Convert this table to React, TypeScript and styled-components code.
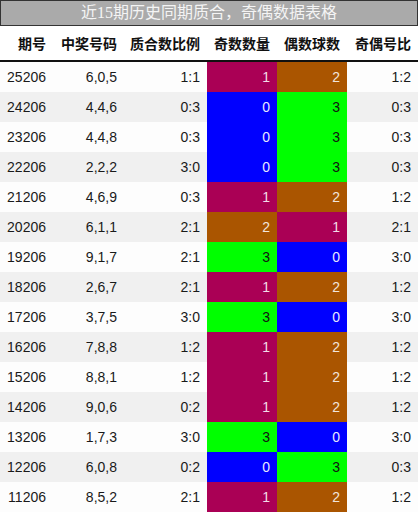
import React from "react";
import styled, { createGlobalStyle } from "styled-components";

const GlobalStyle = createGlobalStyle`
  html, body { margin: 0; padding: 0; background: #ffffff; }
  body { font-family: "Liberation Sans", "Noto Sans CJK SC", sans-serif; }
`;

const COLS = "53px 71px 83px 70px 70px 71px";

const Page = styled.div`
  width: 418px;
  display: flex;
  flex-direction: column;
`;

const TitleBar = styled.div`
  box-sizing: border-box;
  height: 26px;
  background: #aaaaaa;
  border: 1px solid #333333;
  color: #f4f4f4;
  font-family: "Liberation Serif", "Noto Sans CJK SC", serif;
  font-size: 16px;
  line-height: 24px;
  text-align: center;
`;

const HeaderRow = styled.div`
  display: grid;
  grid-template-columns: ${COLS};
  height: 34px;
  border-bottom: 2px solid #111111;
  background: #ffffff;
`;

const HeaderCell = styled.div`
  display: flex;
  align-items: center;
  justify-content: flex-end;
  padding-right: 7px;
  font-family: "Noto Sans CJK SC", sans-serif;
  font-weight: 700;
  font-size: 14px;
  color: #111111;
  white-space: nowrap;
`;

const Row = styled.div<{ $alt: boolean }>`
  display: grid;
  grid-template-columns: ${COLS};
  height: 30px;
  background: ${(p) => (p.$alt ? "#f0f0f0" : "#fdfdfd")};
`;

const Cell = styled.div`
  display: flex;
  align-items: center;
  justify-content: flex-end;
  padding-right: 7px;
  font-size: 14px;
  color: #1a1a1a;
`;

const COLORS: Record<number, { bg: string; fg: string }> = {
  0: { bg: "#0000ff", fg: "#e8e8ff" },
  1: { bg: "#aa0055", fg: "#f2dde8" },
  2: { bg: "#aa5500", fg: "#f2e6dd" },
  3: { bg: "#00ff00", fg: "#111111" },
};

const CountCell = styled(Cell)<{ $v: number }>`
  background: ${(p) => COLORS[p.$v].bg};
  color: ${(p) => COLORS[p.$v].fg};
`;

const headers = ["期号", "中奖号码", "质合数比例", "奇数数量", "偶数球数", "奇偶号比"];

const rows: [string, string, string, number, number, string][] = [
  ["25206", "6,0,5", "1:1", 1, 2, "1:2"],
  ["24206", "4,4,6", "0:3", 0, 3, "0:3"],
  ["23206", "4,4,8", "0:3", 0, 3, "0:3"],
  ["22206", "2,2,2", "3:0", 0, 3, "0:3"],
  ["21206", "4,6,9", "0:3", 1, 2, "1:2"],
  ["20206", "6,1,1", "2:1", 2, 1, "2:1"],
  ["19206", "9,1,7", "2:1", 3, 0, "3:0"],
  ["18206", "2,6,7", "2:1", 1, 2, "1:2"],
  ["17206", "3,7,5", "3:0", 3, 0, "3:0"],
  ["16206", "7,8,8", "1:2", 1, 2, "1:2"],
  ["15206", "8,8,1", "1:2", 1, 2, "1:2"],
  ["14206", "9,0,6", "0:2", 1, 2, "1:2"],
  ["13206", "1,7,3", "3:0", 3, 0, "3:0"],
  ["12206", "6,0,8", "0:2", 0, 3, "0:3"],
  ["11206", "8,5,2", "2:1", 1, 2, "1:2"],
];

export default function App() {
  return (
    <Page>
      <GlobalStyle />
      <TitleBar>近15期历史同期质合，奇偶数据表格</TitleBar>
      <HeaderRow>
        {headers.map((h) => (
          <HeaderCell key={h}>{h}</HeaderCell>
        ))}
      </HeaderRow>
      {rows.map((r, i) => (
        <Row key={r[0]} $alt={i % 2 === 1}>
          <Cell>{r[0]}</Cell>
          <Cell>{r[1]}</Cell>
          <Cell>{r[2]}</Cell>
          <CountCell $v={r[3]}>{r[3]}</CountCell>
          <CountCell $v={r[4]}>{r[4]}</CountCell>
          <Cell>{r[5]}</Cell>
        </Row>
      ))}
    </Page>
  );
}
